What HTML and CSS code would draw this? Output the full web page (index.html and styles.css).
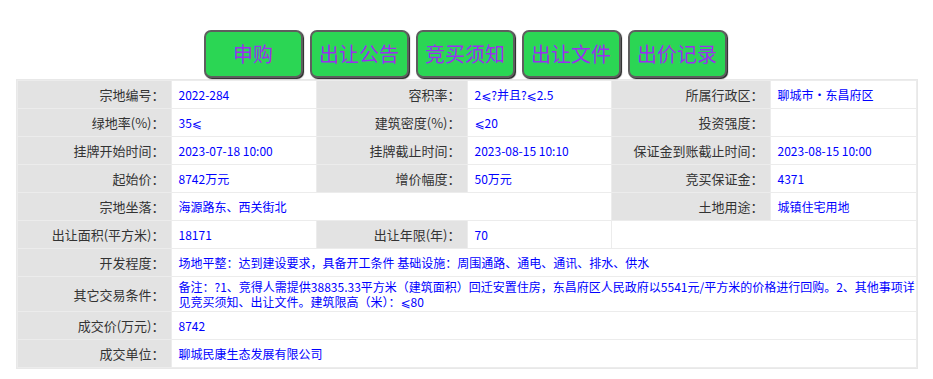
FILE: index.html
```html
<!DOCTYPE html>
<html lang="zh-CN">
<head>
<meta charset="utf-8">
<title>宗地详情</title>
<link rel="stylesheet" href="styles.css">
</head>
<body>
<div class="actions">
  <button class="btn">申购</button>
  <button class="btn">出让公告</button>
  <button class="btn">竞买须知</button>
  <button class="btn">出让文件</button>
  <button class="btn">出价记录</button>
</div>
<table class="info">
  <colgroup>
    <col class="c1"><col class="c2"><col class="c3"><col class="c4"><col class="c5"><col class="c6">
  </colgroup>
  <tr>
    <td class="lbl">宗地编号：</td><td class="val">2022-284</td>
    <td class="lbl">容积率：</td><td class="val">2⩽?并且?⩽2.5</td>
    <td class="lbl">所属行政区：</td><td class="val big">聊城市·东昌府区</td>
  </tr>
  <tr>
    <td class="lbl">绿地率(%)：</td><td class="val">35⩽</td>
    <td class="lbl">建筑密度(%)：</td><td class="val">⩽20</td>
    <td class="lbl">投资强度：</td><td class="val"></td>
  </tr>
  <tr>
    <td class="lbl">挂牌开始时间：</td><td class="val">2023-07-18 10:00</td>
    <td class="lbl">挂牌截止时间：</td><td class="val">2023-08-15 10:10</td>
    <td class="lbl">保证金到账截止时间：</td><td class="val">2023-08-15 10:00</td>
  </tr>
  <tr>
    <td class="lbl">起始价：</td><td class="val">8742万元</td>
    <td class="lbl">增价幅度：</td><td class="val">50万元</td>
    <td class="lbl">竞买保证金：</td><td class="val">4371</td>
  </tr>
  <tr>
    <td class="lbl">宗地坐落：</td><td class="val big" colspan="3">海源路东、西关街北</td>
    <td class="lbl">土地用途：</td><td class="val big">城镇住宅用地</td>
  </tr>
  <tr>
    <td class="lbl">出让面积(平方米)：</td><td class="val">18171</td>
    <td class="lbl">出让年限(年)：</td><td class="val">70</td>
    <td class="val" colspan="2"></td>
  </tr>
  <tr>
    <td class="lbl">开发程度：</td><td class="val big" colspan="5">场地平整：达到建设要求，具备开工条件 基础设施：周围通路、通电、通讯、排水、供水</td>
  </tr>
  <tr>
    <td class="lbl">其它交易条件：</td><td class="val multi" colspan="5">备注：?1、竞得人需提供38835.33平方米（建筑面积）回迁安置住房，东昌府区人民政府以5541元/平方米的价格进行回购。2、其他事项详见竞买须知、出让文件。建筑限高（米）：⩽80</td>
  </tr>
  <tr>
    <td class="lbl">成交价(万元)：</td><td class="val" colspan="5">8742</td>
  </tr>
  <tr>
    <td class="lbl">成交单位：</td><td class="val big" colspan="5">聊城民康生态发展有限公司</td>
  </tr>
</table>
</body>
</html>
```
FILE: styles.css
```css
html, body {
  margin: 0;
  padding: 0;
  background: #ffffff;
  font-family: "Noto Sans CJK SC", "DejaVu Sans", sans-serif;
}

.actions {
  display: flex;
  justify-content: center;
  gap: 7px;
  padding-top: 30px;
  padding-right: 3px;
}

.btn {
  width: 99px;
  height: 48px;
  box-sizing: border-box;
  background: #2bd654;
  border: 2px solid #5e5e5e;
  border-radius: 7px;
  box-shadow: 1px 1px 1px #1e1e1e;
  color: #9a2ff0;
  font-family: "Noto Sans CJK SC", sans-serif;
  font-size: 20px;
  line-height: 1;
  padding: 0;
  cursor: pointer;
}

.info {
  margin: 1px auto 0;
  width: 900px;
  table-layout: fixed;
  border-collapse: separate;
  border-spacing: 1px;
  border: 1px solid #e8e8e8;
  background: #ececec;
  box-sizing: border-box;
}

.c1 { width: 153px; }
.c2 { width: 144px; }
.c3 { width: 150px; }
.c4 { width: 143px; }
.c5 { width: 158px; }
.c6 { width: 145px; }

.info td {
  height: 27px;
  box-sizing: border-box;
  padding: 0;
  vertical-align: middle;
}

.lbl {
  background: #e3e3e3;
  color: #333333;
  font-size: 13px;
  text-align: right;
  padding-right: 6px !important;
  white-space: nowrap;
}

.val {
  background: #ffffff;
  color: #0000ff;
  font-size: 12px;
  padding-left: 7px !important;
  padding-right: 4px !important;
  white-space: nowrap;
}

.val.big {
  font-size: 12px;
}

.val.multi {
  font-size: 12px;
  white-space: normal;
  line-height: 15px;
  height: 34px;
  padding-top: 2px !important;
  padding-right: 0 !important;
  padding-bottom: 2px !important;
}
```
